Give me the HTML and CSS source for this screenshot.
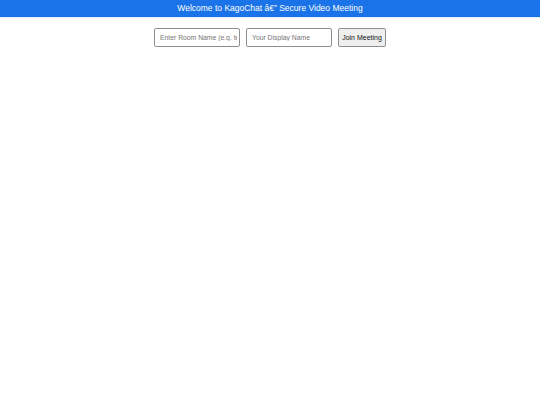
FILE: index.html
```html
<!DOCTYPE html>
<html>
<head>
<meta charset="utf-8">
<link rel="stylesheet" href="styles.css">
</head>
<body>
<header class="top-bar">Welcome to KagoChat â€” Secure Video Meeting</header>
<div class="join-row">
  <input class="field" type="text" placeholder="Enter Room Name (e.g. team-sync)">
  <input class="field" type="text" placeholder="Your Display Name">
  <button class="join-btn">Join Meeting</button>
</div>
</body>
</html>
```
FILE: styles.css
```css
html, body {
  margin: 0;
  padding: 0;
  background: #ffffff;
  font-family: "Liberation Sans", Arial, sans-serif;
}
.top-bar {
  display: block;
  background: #1a73e8;
  color: #ffffff;
  text-align: center;
  font-size: 8.5px;
  line-height: 17px;
  height: 17px;
  border-bottom: 1px solid #e3effd;
}
.join-row {
  display: flex;
  justify-content: center;
  gap: 6px;
  margin-top: 10px;
}
.field {
  box-sizing: border-box;
  width: 86px;
  height: 19px;
  padding: 0 2px 0 5px;
  border: 1px solid #8f8f8f;
  border-radius: 2px;
  font-family: "Liberation Sans", Arial, sans-serif;
  font-size: 6.8px;
  color: #333;
  outline: none;
}
.field::placeholder {
  color: #757575;
}
.join-btn {
  box-sizing: border-box;
  width: 48px;
  height: 19px;
  padding: 0 2px;
  border: 1px solid #8f8f8f;
  border-radius: 2px;
  background: #efefef;
  font-family: "Liberation Sans", Arial, sans-serif;
  font-size: 7px;
  color: #111;
}
```
